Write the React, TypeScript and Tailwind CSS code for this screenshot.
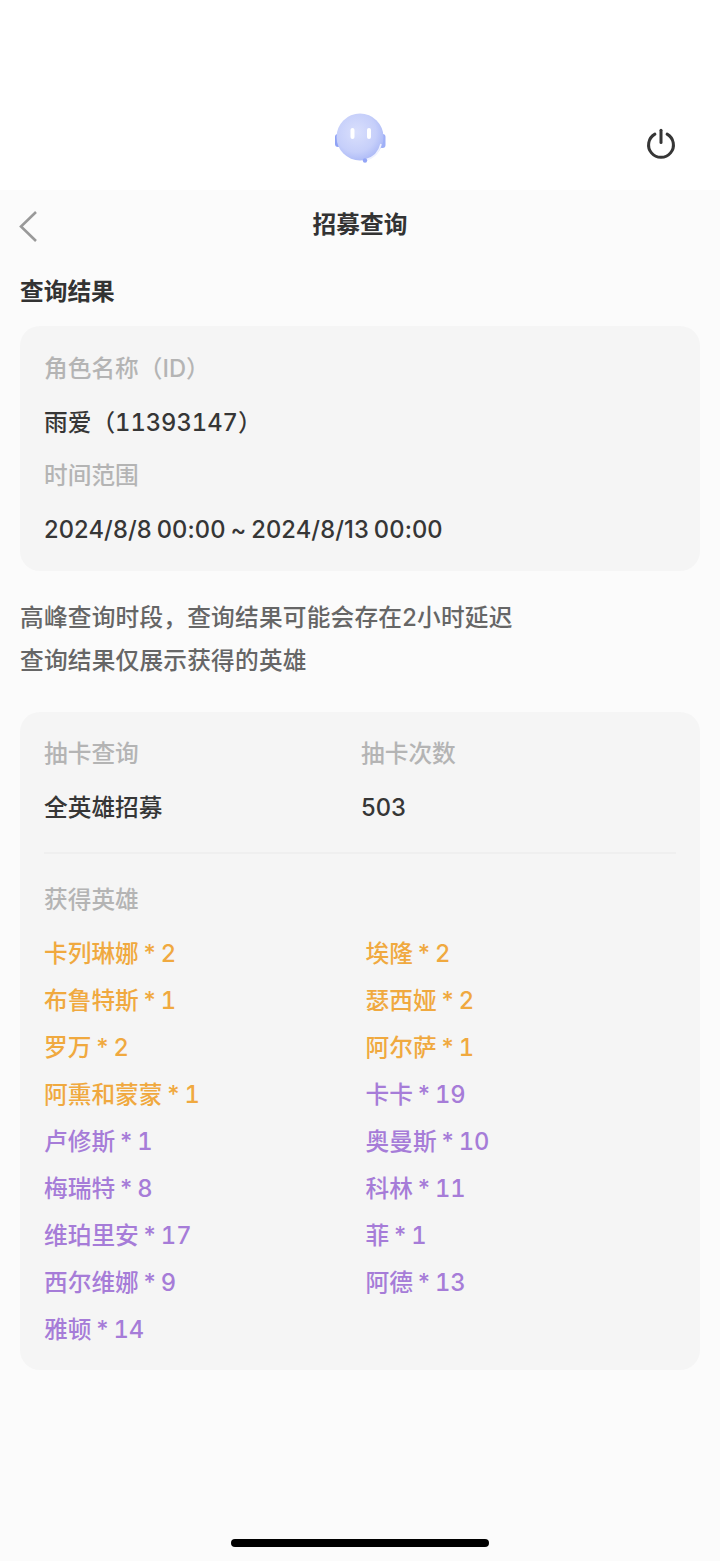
import React from 'react';

const FONT = "font-['Inter','Noto_Sans_CJK_SC',sans-serif]";

const heroes: [string, string][] = [
  ['卡列琳娜 * 2', 'gold'],
  ['埃隆 * 2', 'gold'],
  ['布鲁特斯 * 1', 'gold'],
  ['瑟西娅 * 2', 'gold'],
  ['罗万 * 2', 'gold'],
  ['阿尔萨 * 1', 'gold'],
  ['阿熏和蒙蒙 * 1', 'gold'],
  ['卡卡 * 19', 'purple'],
  ['卢修斯 * 1', 'purple'],
  ['奥曼斯 * 10', 'purple'],
  ['梅瑞特 * 8', 'purple'],
  ['科林 * 11', 'purple'],
  ['维珀里安 * 17', 'purple'],
  ['菲 * 1', 'purple'],
  ['西尔维娜 * 9', 'purple'],
  ['阿德 * 13', 'purple'],
  ['雅顿 * 14', 'purple'],
];

const Label: React.FC<{ children: React.ReactNode }> = ({ children }) => (
  <div className="h-[32px] text-[23.7px] leading-[32px] font-medium text-[#b4b4b4]">{children}</div>
);

const Value: React.FC<{ children: React.ReactNode }> = ({ children }) => (
  <div className="h-[32px] text-[23.7px] leading-[32px] font-medium text-[#363636]">{children}</div>
);

const Mascot = () => (
  <svg width="52" height="52" viewBox="0 0 52 52">
    <defs>
      <radialGradient id="face" cx="42%" cy="40%" r="65%">
        <stop offset="0%" stopColor="#d9dffc" />
        <stop offset="65%" stopColor="#c6cffa" />
        <stop offset="100%" stopColor="#a9b7f6" />
      </radialGradient>
      <filter id="soft" x="-5%" y="-5%" width="110%" height="110%">
        <feGaussianBlur stdDeviation="0.5" />
      </filter>
    </defs>
    <g filter="url(#soft)">
      <rect x="1" y="22" width="6" height="13" rx="3" fill="#8fa2f5" />
      <rect x="45" y="22" width="6.5" height="14" rx="3" fill="#9fb0f7" />
      <circle cx="26" cy="25" r="23.5" fill="url(#face)" />
      <rect x="16.5" y="16" width="4" height="11" rx="2" fill="#ffffff" />
      <rect x="33" y="16" width="4" height="11" rx="2" fill="#ffffff" />
      <path d="M47 32c-2 9-7 14-16 16" fill="none" stroke="#eef1ff" strokeWidth="1.5" />
      <circle cx="31" cy="48.5" r="2.2" fill="#93a5f6" />
    </g>
  </svg>
);

export default function App() {
  return (
    <div className={`${FONT} flex h-[1561px] w-[720px] flex-col overflow-hidden bg-[#fbfbfb]`}>
      <div className="flex h-[190px] items-end justify-between bg-white">
        <div className="w-[76px]" />
        <div className="mb-[26px] ml-[-1px]">
          <Mascot />
        </div>
        <div className="mb-[30px] mr-[43px]">
          <svg width="32" height="32" viewBox="0 0 34 34" fill="none" stroke="#363636" strokeWidth="3.2" strokeLinecap="round">
            <path d="M10.5 6.5a13.2 13.2 0 1 0 13 0" />
            <path d="M17 2.5v13" />
          </svg>
        </div>
      </div>

      <div className="relative flex h-[70px] items-center justify-center">
        <button className="absolute left-[16px] top-[19px]">
          <svg width="26" height="34" viewBox="0 0 26 34" fill="none" stroke="#999999" strokeWidth="2.6">
            <path d="M20 3 5 17.5 20 32" />
          </svg>
        </button>
        <span className="mt-[-1px] text-[23.7px] font-semibold text-[#333333]">招募查询</span>
      </div>

      <div className="px-[20px]">
        <div className="mt-[16px] h-[32px] text-[23.7px] leading-[32px] font-semibold text-[#333333]">查询结果</div>

        <div className="mt-[18px] flex h-[245px] flex-col gap-[21.5px] rounded-[20px] bg-[#f5f5f5] px-[24px] pt-[27px]">
          <Label>角色名称（ID）</Label>
          <Value>
            雨爱（<span className="tabular-nums">11393147</span>）
          </Value>
          <Label>时间范围</Label>
          <Value>
            <span className="tracking-[0.1px] [word-spacing:-1.5px]">2024/8/8 00:00 ~ 2024/8/13 00:00</span>
          </Value>
        </div>

        <div className="mt-[25px] text-[23.7px] leading-[43px] font-medium tracking-[0.2px] text-[#666666]">
          <p>高峰查询时段，查询结果可能会存在2小时延迟</p>
          <p>查询结果仅展示获得的英雄</p>
        </div>

        <div className="mt-[30px] h-[658px] rounded-[20px] bg-[#f5f5f5] px-[24px] pt-[26px]">
          <div className="flex">
            <div className="w-[317px]">
              <Label>抽卡查询</Label>
              <div className="mt-[22px]">
                <Value>全英雄招募</Value>
              </div>
            </div>
            <div>
              <Label>抽卡次数</Label>
              <div className="mt-[22px]">
                <Value>503</Value>
              </div>
            </div>
          </div>
          <div className="mt-[28px] h-[2px] bg-[#efefef]" />
          <div className="mt-[30px]">
            <Label>获得英雄</Label>
          </div>
          <div className="mt-[21.5px] grid grid-cols-[321.5px_1fr] gap-y-[15px]">
            {heroes.map(([name, tier]) => (
              <div
                key={name}
                className={`h-[32px] text-[23.7px] leading-[32px] font-medium tabular-nums [word-spacing:-3px] ${tier === 'gold' ? 'text-[#f0a93f]' : 'text-[#a67cd8]'}`}
              >
                {name}
              </div>
            ))}
          </div>
        </div>
      </div>

      <div className="mt-auto mb-[14px] flex justify-center">
        <div className="h-[8px] w-[258px] rounded-full bg-black" />
      </div>
    </div>
  );
}
